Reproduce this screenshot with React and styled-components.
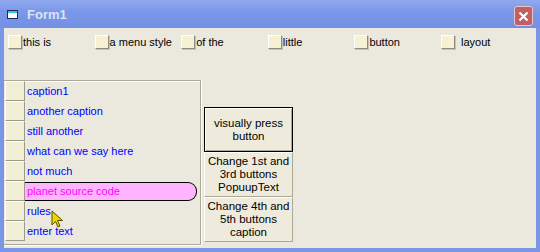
import React from 'react';
import styled, { createGlobalStyle } from 'styled-components';

const GlobalStyle = createGlobalStyle`
  html, body {
    margin: 0;
    padding: 0;
    background: #ece9d8;
  }
`;

const Window = styled.div`
  position: relative;
  width: 540px;
  height: 252px;
  box-sizing: border-box;
  display: flex;
  flex-direction: column;
  background: #7a96e6;
  font-family: "Liberation Sans", Arial, sans-serif;
  overflow: hidden;
`;

const TitleBar = styled.div`
  height: 28px;
  flex: none;
  display: flex;
  align-items: center;
  padding: 0 7px;
  background: linear-gradient(180deg, #90a9ee 0%, #7b97e8 40%, #7390e4 100%);
`;

const Title = styled.span`
  margin-left: 9px;
  color: #dbe3fa;
  font-weight: bold;
  font-size: 13px;
  flex: 1;
`;

const CloseButton = styled.div`
  width: 19px;
  height: 20px;
  box-sizing: border-box;
  border: 1px solid #e8c4c4;
  border-radius: 3px;
  background: #c25f62;
  display: flex;
  align-items: center;
  justify-content: center;
  margin-top: 4px;
`;

const Client = styled.div`
  flex: 1;
  margin: 0 4px 4px 4px;
  background: #ebe8dd;
  display: flex;
  flex-direction: column;
`;

const MenuRow = styled.div`
  display: flex;
  padding: 7px 0 0 4px;
  height: 45px;
  box-sizing: border-box;
`;

const MenuItem = styled.div`
  width: 86.6px;
  display: flex;
  align-items: flex-start;
  font-size: 11px;
  color: #000;
  gap: ${({ $gap }) => $gap || 1}px;
`;

const BevelBox = styled.div`
  width: ${({ $w }) => $w}px;
  height: ${({ $h }) => $h}px;
  flex: none;
  box-sizing: border-box;
  background: #f6f0d4;
  border-top: 1px solid #ffffff;
  border-left: 1px solid #ffffff;
  border-right: 1px solid #8e8c80;
  border-bottom: 1px solid #8e8c80;
  box-shadow: 1px 1px 0 #c8c4b4;
`;

const MenuLabel = styled.span`
  line-height: 14px;
`;

const Body = styled.div`
  display: flex;
  gap: 3px;
  padding-top: 7px;
`;

const Frame = styled.div`
  width: 197px;
  height: 165px;
  box-sizing: border-box;
  border-top: 1px solid #aca899;
  border-right: 1px solid #aca899;
  border-bottom: 1px solid #aca899;
  box-shadow: inset 0 1px 0 #fff, 1px 0 0 #fff, 0 1px 0 #fff;
  display: flex;
  flex-direction: column;
`;

const Row = styled.div`
  height: 20px;
  display: flex;
  align-items: center;
  padding-left: 1px;
`;

const RowButton = styled.div`
  width: 20px;
  height: 20px;
  flex: none;
  box-sizing: border-box;
  background: #f3eed6;
  border-top: 1px solid #ffffff;
  border-left: 1px solid #ffffff;
  border-right: 1px solid #9d9a8c;
  border-bottom: 1px solid #9d9a8c;
`;

const RowText = styled.div`
  height: 19px;
  display: flex;
  align-items: center;
  padding-left: 2px;
  font-size: 11px;
  color: ${({ $hot }) => ($hot ? '#ff00ff' : '#0000ff')};
  ${({ $hot }) =>
    $hot &&
    `
    width: 172px;
    box-sizing: border-box;
    background: #ffb4ff;
    border: 1px solid #000;
    border-left: none;
    border-radius: 0 9px 9px 0;
  `}
`;

const ButtonColumn = styled.div`
  display: flex;
  flex-direction: column;
  margin-top: 27px;
  width: 89px;
`;

const PushButton = styled.div`
  height: 45px;
  box-sizing: border-box;
  display: flex;
  align-items: center;
  justify-content: center;
  text-align: center;
  font-size: 11.5px;
  line-height: 13px;
  color: #000;
  background: #efebdc;
  border-top: 1px solid #ffffff;
  border-left: 1px solid #ffffff;
  border-right: 1px solid #aca899;
  border-bottom: 1px solid #aca899;
  ${({ $default }) =>
    $default &&
    `
    border: 1px solid #000;
    box-shadow: inset 1px 1px 0 #fff, inset -1px -1px 0 #aca899;
  `}
`;

const Cursor = styled.svg`
  position: absolute;
  left: 51px;
  top: 210px;
`;

const menuItems = ['this is', 'a menu style', 'of the', 'little', 'button', 'layout'];

const rows = [
  'caption1',
  'another caption',
  'still another',
  'what can we say here',
  'not much',
  'planet source code',
  'rules',
  'enter text',
];

const App = () => (
  <>
    <GlobalStyle />
    <Window>
      <TitleBar>
        <svg width="11" height="9" viewBox="0 0 11 9">
          <rect x="0.5" y="0.5" width="10" height="8" fill="#fff" stroke="#1a2a5a" />
          <rect x="1" y="1" width="9" height="2" fill="#2fc8e8" />
        </svg>
        <Title>Form1</Title>
        <CloseButton>
          <svg width="11" height="11" viewBox="0 0 11 11">
            <path d="M1.5 1.5 L9.5 9.5 M9.5 1.5 L1.5 9.5" stroke="#fff" strokeWidth="2.2" />
          </svg>
        </CloseButton>
      </TitleBar>
      <Client>
        <MenuRow>
          {menuItems.map((m, i) => (
            <MenuItem key={m} $gap={i === 5 ? 6 : 1}>
              <BevelBox $w={14} $h={14} />
              <MenuLabel>{m}</MenuLabel>
            </MenuItem>
          ))}
        </MenuRow>
        <Body>
          <Frame>
            {rows.map((r) => (
              <Row key={r}>
                <RowButton />
                <RowText $hot={r === 'planet source code'}>{r}</RowText>
              </Row>
            ))}
          </Frame>
          <ButtonColumn>
            <PushButton $default>
              visually press
              <br />
              button
            </PushButton>
            <PushButton>
              Change 1st and
              <br />
              3rd buttons
              <br />
              PopuupText
            </PushButton>
            <PushButton>
              Change 4th and
              <br />
              5th buttons
              <br />
              caption
            </PushButton>
          </ButtonColumn>
        </Body>
      </Client>
      <Cursor width="14" height="20" viewBox="0 0 14 20">
        <path d="M1 1 L1 15 L4.5 11.5 L7 17 L9 16 L6.5 10.5 L11.5 10.5 Z" fill="#e8d800" stroke="#5a5000" strokeWidth="1" />
      </Cursor>
    </Window>
  </>
);

export default App;
